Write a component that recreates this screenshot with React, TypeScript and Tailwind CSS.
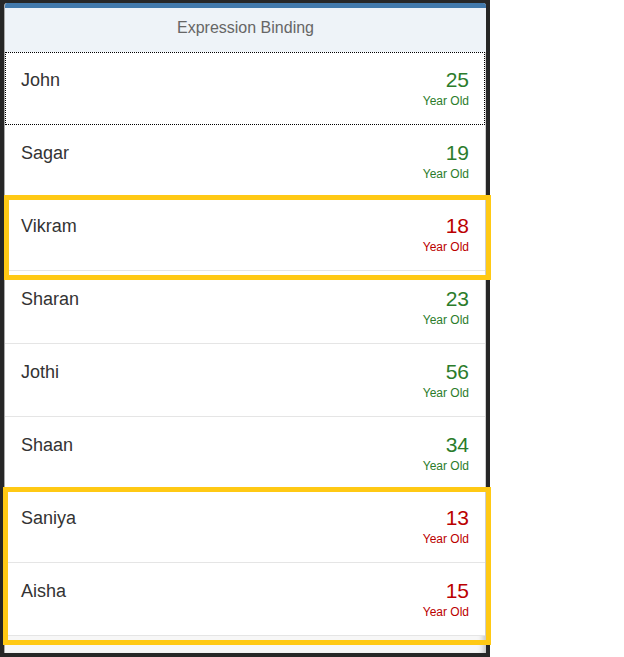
import React from "react";

type Person = { name: string; age: number };

const people: Person[] = [
  { name: "John", age: 25 },
  { name: "Sagar", age: 19 },
  { name: "Vikram", age: 18 },
  { name: "Sharan", age: 23 },
  { name: "Jothi", age: 56 },
  { name: "Shaan", age: 34 },
  { name: "Saniya", age: 13 },
  { name: "Aisha", age: 15 },
];

const Row: React.FC<{ person: Person; focused?: boolean }> = ({ person, focused }) => {
  const young = person.age <= 18;
  const color = young ? "text-[#bb0000]" : "text-[#2b7c2b]";
  return (
    <div
      className={
        focused
          ? "h-[73px] flex justify-between pl-[15px] pr-[15px] pt-[16px] border border-dotted border-black"
          : "h-[73px] flex justify-between px-4 pt-[17px] border-b border-[#e5e5e5]"
      }
    >
      <div className="text-[18px] leading-[22px] text-[#333333]">{person.name}</div>
      <div className={`flex flex-col items-end -mt-[1px] ${color}`}>
        <span className="text-[21px] leading-[24px]">{person.age}</span>
        <span className="text-[12px] leading-[14px] mt-[2px]">Year Old</span>
      </div>
    </div>
  );
};

export default function App() {
  return (
    <div className="relative w-[624px] h-[657px] bg-white font-['Liberation_Sans',Arial,sans-serif]">
      {/* device frame */}
      <div className="w-[490px] h-[657px] bg-[#262626] pt-[3px] px-[4px] pb-[4px] flex flex-col">
        <div className="flex-1 flex flex-col bg-[#f7f7f7] border-l border-[#a9a9a9] rounded-t-[3px] overflow-hidden shadow-[inset_-6px_0_6px_-4px_rgba(0,0,0,0.25)]">
          <div className="h-[5px] bg-[#4279ab] shrink-0" />
          <div className="h-[44px] shrink-0 bg-[#eef3f8] flex items-center justify-center pb-[4px] text-[16px] text-[#666666]">
            Expression Binding
          </div>
          <div className="bg-white mr-[1px]">
            {people.map((p, i) => (
              <Row key={p.name} person={p} focused={i === 0} />
            ))}
          </div>
        </div>
      </div>

      {/* highlight boxes */}
      <div className="absolute left-[4px] top-[195px] w-[487px] h-[85px] border-[5px] border-[#ffc914]" />
      <div className="absolute left-[3px] top-[487px] w-[488px] h-[158px] border-[5px] border-[#ffc914]" />
    </div>
  );
}
